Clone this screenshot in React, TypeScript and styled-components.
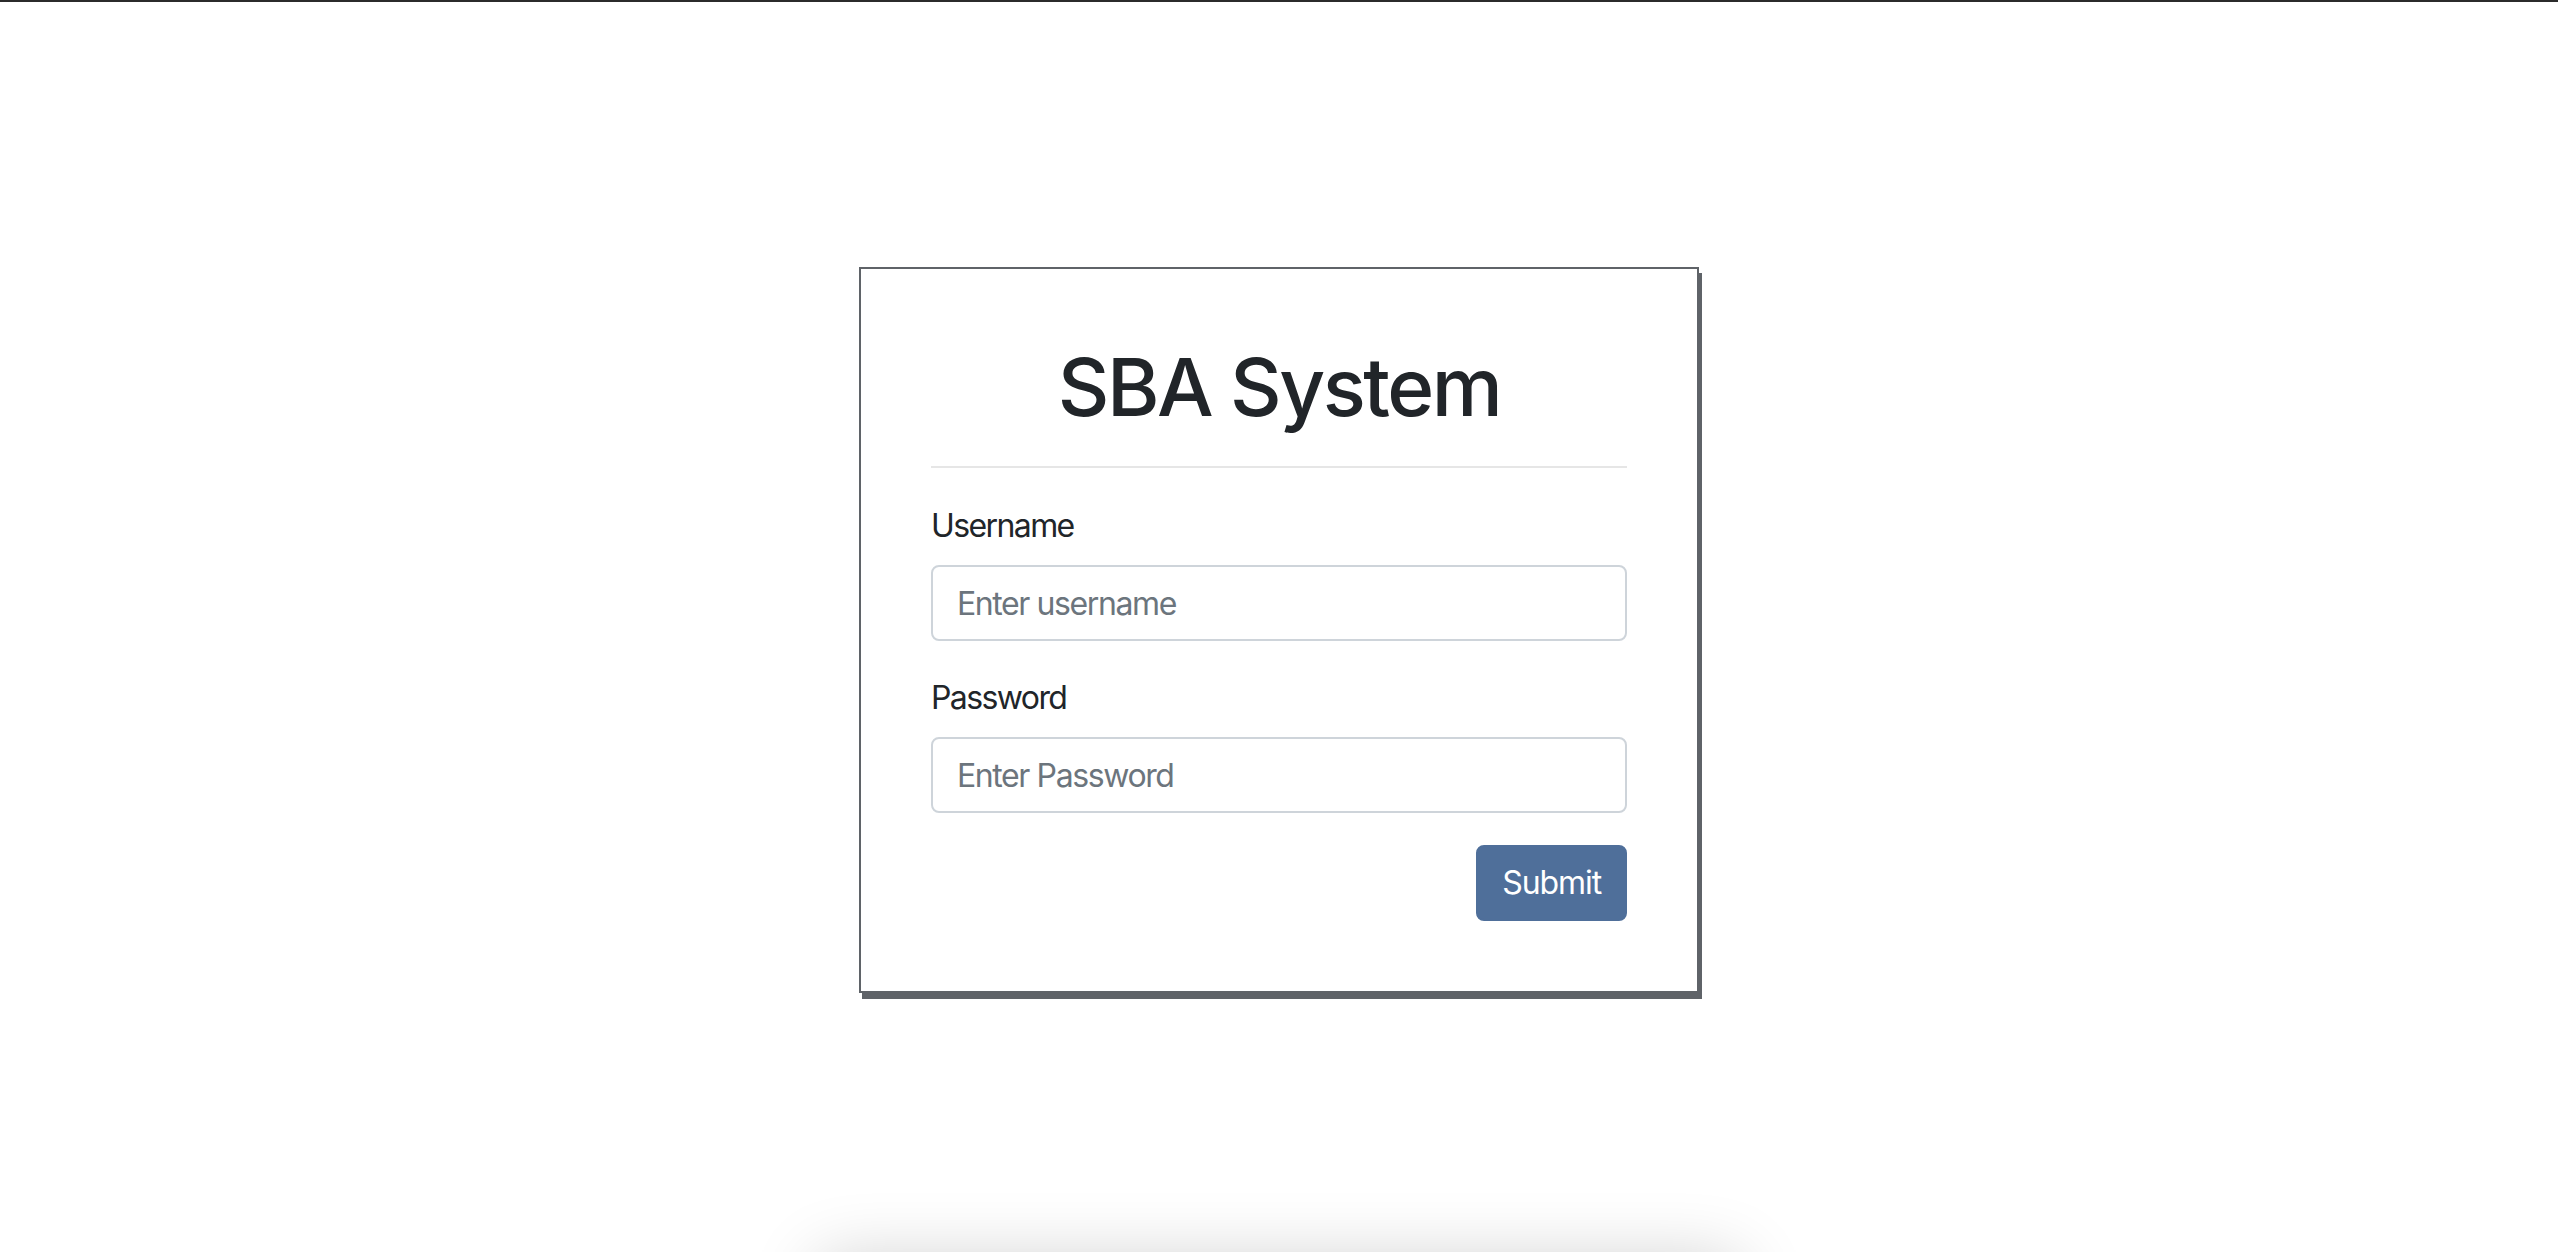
import React from "react";
import styled, { createGlobalStyle } from "styled-components";

const GlobalStyle = createGlobalStyle`
  * { box-sizing: border-box; }
  html, body {
    margin: 0;
    padding: 0;
    background: #ffffff;
  }
  body {
    font-family: Inter, "Noto Sans", "Liberation Sans", sans-serif;
    color: #212529;
    border-top: 2px solid #2b2b2b;
    overflow: hidden;
  }
`;

const Page = styled.div`
  display: flex;
  flex-direction: column;
  align-items: center;
  padding-top: 265px;
`;

const Card = styled.form`
  width: 840px;
  background: #ffffff;
  border: 2px solid #5f6368;
  box-shadow: 3px 6px 0 #5f6368;
  padding: 70px;
  display: flex;
  flex-direction: column;
`;

const Title = styled.h1`
  margin: 0;
  font-size: 80px;
  line-height: 96px;
  font-weight: 500;
  text-align: center;
  color: #212529;
  letter-spacing: -2.5px;
`;

const Divider = styled.hr`
  margin: 31px 0 0;
  border: 0;
  border-top: 2px solid #e6e6e6;
`;

const Group = styled.div<{ $gap: number }>`
  margin-top: ${(p) => p.$gap}px;
  display: flex;
  flex-direction: column;
`;

const Label = styled.label`
  font-size: 32px;
  line-height: 48px;
  font-weight: 400;
  color: #212529;
  margin-bottom: 15px;
  letter-spacing: -1.6px;
`;

const Input = styled.input`
  width: 100%;
  height: 76px;
  padding: 0 24px;
  border: 2px solid #ced4da;
  border-radius: 8px;
  font-family: inherit;
  font-size: 32px;
  color: #495057;
  letter-spacing: -1.4px;
  outline: none;
  &::placeholder {
    color: #6c757d;
  }
`;

const Actions = styled.div`
  margin-top: 32px;
  display: flex;
  justify-content: flex-end;
`;

const SubmitButton = styled.button`
  height: 76px;
  padding: 0 24px;
  border: 2px solid #4f6f9a;
  border-radius: 8px;
  background: #4f6f9a;
  color: #ffffff;
  font-family: inherit;
  font-size: 32px;
  line-height: 48px;
  letter-spacing: -1.1px;
  cursor: pointer;
`;

const Footer = styled.div`
  margin-top: 268px;
  width: 920px;
  height: 200px;
  background: #ffffff;
  box-shadow: 0 0 70px rgba(0, 0, 0, 0.2);
`;

export default function App() {
  return (
    <>
      <GlobalStyle />
      <Page>
        <Card onSubmit={(e) => e.preventDefault()}>
          <Title>SBA System</Title>
          <Divider />
          <Group $gap={34}>
            <Label htmlFor="username">Username</Label>
            <Input id="username" type="text" placeholder="Enter username" />
          </Group>
          <Group $gap={33}>
            <Label htmlFor="password">Password</Label>
            <Input id="password" type="password" placeholder="Enter Password" />
          </Group>
          <Actions>
            <SubmitButton type="submit">Submit</SubmitButton>
          </Actions>
        </Card>
        <Footer />
      </Page>
    </>
  );
}
